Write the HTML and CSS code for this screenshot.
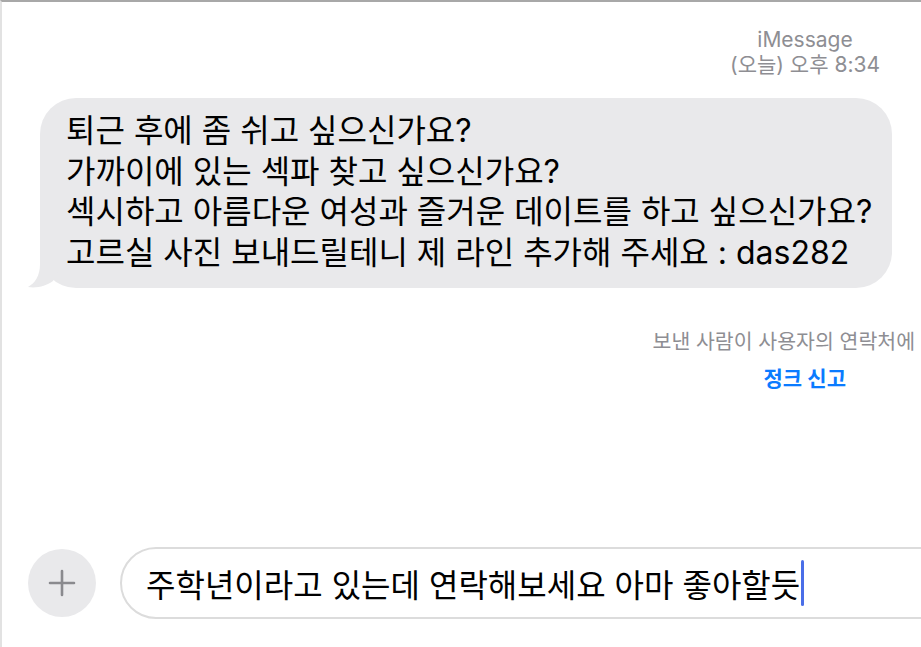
FILE: index.html
```html
<!DOCTYPE html>
<html lang="ko">
<head>
<meta charset="utf-8">
<link rel="stylesheet" href="styles.css">
</head>
<body>
<div class="screen">
  <div class="meta">
    <div class="service">iMessage</div>
    <div class="time">(오늘) 오후 8:34</div>
  </div>
  <div class="bubble">
    <svg class="tail" width="40" height="36" viewBox="0 0 40 36"><path d="M12 0 L12 12 C12 24 7 31 0 35 C9 36.5 18 34 25 29 L40 0 Z" fill="#e9e9eb"/></svg>
    <p class="line">퇴근 후에 좀 쉬고 싶으신가요?</p>
    <p class="line">가까이에 있는 섹파 찾고 싶으신가요?</p>
    <p class="line">섹시하고 아름다운 여성과 즐거운 데이트를 하고 싶으신가요?</p>
    <p class="line">고르실 사진 보내드릴테니 제 라인 추가해 주세요 : das282</p>
  </div>
  <div class="notice">
    <div class="notice-text">보낸 사람이 사용자의 연락처에</div>
    <div class="junk">정크 신고</div>
  </div>
  <div class="composer">
    <div class="plus">
      <svg width="28" height="28" viewBox="0 0 28 28"><path d="M14 2 V26 M2 14 H26" stroke="#8a8a8e" stroke-width="2.6" stroke-linecap="round"/></svg>
    </div>
    <div class="field">
      <span class="typed">주학년이라고 있는데 연락해보세요 아마 좋아할듯</span><span class="caret"></span>
    </div>
  </div>
</div>
</body>
</html>
```
FILE: styles.css
```css
html, body {
  margin: 0;
  padding: 0;
  background: #ffffff;
}
.screen {
  box-sizing: border-box;
  width: 921px;
  height: 647px;
  border-top: 2px solid #a8a8a8;
  border-left: 2px solid #e2e2e2;
  display: flex;
  flex-direction: column;
  overflow: hidden;
  font-family: Inter, "Noto Sans CJK KR", sans-serif;
  color: #000;
}
.meta {
  align-self: flex-end;
  margin-right: 41px;
  margin-top: 25px;
  text-align: center;
  color: #8e8e93;
  font-size: 21px;
  line-height: 25px;
}
.bubble {
  position: relative;
  margin: 21px 29px 0 38px;
  background: #e9e9eb;
  border-radius: 36px;
  padding: 13px 10px 15px 26px;
}
.tail {
  position: absolute;
  left: -12px;
  bottom: 0;
}
.line {
  margin: 0;
  font-size: 32px;
  line-height: 40.5px;
  white-space: nowrap;
}
.notice {
  margin-top: 42px;
  display: flex;
  flex-direction: column;
  align-items: flex-end;
  color: #8e8e93;
  font-size: 20.5px;
  line-height: 24px;
}
.notice-text {
  margin-right: 6px;
}
.junk {
  margin-top: 13px;
  margin-right: 75px;
  color: #0a7bff;
  font-size: 21px;
  font-weight: 600;
}
.composer {
  margin-top: auto;
  margin-bottom: 28px;
  display: flex;
  align-items: center;
  gap: 24px;
  padding-left: 26px;
}
.plus {
  width: 68px;
  height: 68px;
  border-radius: 50%;
  background: #e9e9eb;
  display: flex;
  align-items: center;
  justify-content: center;
  flex: none;
}
.field {
  flex: none;
  width: 860px;
  height: 68px;
  border: 2px solid #dcdcdc;
  border-radius: 36px;
  display: flex;
  align-items: center;
  padding-left: 24px;
  box-sizing: content-box;
}
.typed {
  font-size: 32px;
}
.caret {
  display: inline-block;
  width: 3px;
  height: 46px;
  margin-left: 1px;
  border-radius: 2px;
  background: #4a6ee8;
}
```
